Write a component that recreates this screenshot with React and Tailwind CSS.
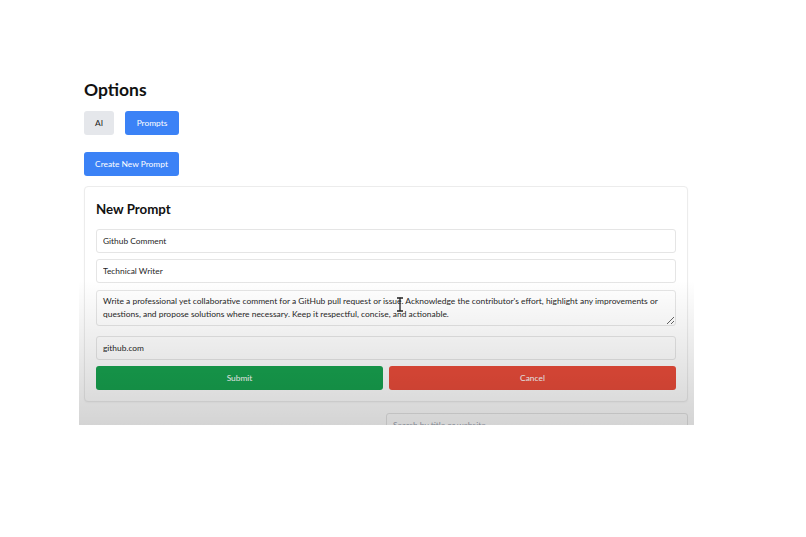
import { useState } from 'react';

const PROMPT_TEXT =
    "Write a professional yet collaborative comment for a GitHub pull request or issue. Acknowledge the contributor's effort, highlight any improvements or questions, and propose solutions where necessary. Keep it respectful, concise, and actionable.";

const App = () => {
    const [tab, setTab] = useState('prompts');
    const [title, setTitle] = useState('Github Comment');
    const [role, setRole] = useState('Technical Writer');
    const [prompt, setPrompt] = useState(PROMPT_TEXT);
    const [site, setSite] = useState('github.com');

    const inputClass =
        'h-[24px] w-full rounded-[3px] border border-[#e5e5e5] bg-white px-[6px] text-[8.4px] text-[#1f1f1f] outline-none';

    return (
        <div className="min-h-[537px] bg-white font-['Lato',sans-serif] text-[#111]">
            <div className="relative ml-[79px] h-[425px] w-[615px] overflow-hidden">
                <div className="pl-[5px] pr-[6px] pt-[79px]">
                    <h1 className="h-[22px] text-[17.5px] font-bold leading-[22px]">Options</h1>

                    {/* tabs */}
                    <div className="mt-[10px] flex gap-[11px]">
                        <button
                            onClick={() => setTab('ai')}
                            className={`h-[24px] w-[30px] rounded-[3px] text-[8.4px] ${tab === 'ai' ? 'bg-[#3b82f6] text-white' : 'bg-[#e5e7eb] text-[#222]'}`}
                        >
                            AI
                        </button>
                        <button
                            onClick={() => setTab('prompts')}
                            className={`h-[24px] w-[54px] rounded-[3px] text-[8.4px] ${tab === 'prompts' ? 'bg-[#3b82f6] text-white' : 'bg-[#e5e7eb] text-[#222]'}`}
                        >
                            Prompts
                        </button>
                    </div>

                    <button className="mt-[17px] h-[24px] w-[95px] rounded-[3px] bg-[#3b82f6] text-[8.4px] text-white">
                        Create New Prompt
                    </button>

                    {/* new prompt card */}
                    <div className="mt-[10px] rounded-[4px] border border-[#ececec] bg-white p-[11px] shadow-[0_1px_2px_rgba(0,0,0,0.04)]">
                        <h2 className="mb-[9px] h-[22px] text-[13.3px] font-bold leading-[22px]">New Prompt</h2>
                        <div className="flex flex-col gap-[6px]">
                            <input className={inputClass} value={title} onChange={e => setTitle(e.target.value)} />
                            <input className={inputClass} value={role} onChange={e => setRole(e.target.value)} />
                            <textarea
                                className="mb-[4px] mt-[1px] block h-[36px] w-full rounded-[3px] border border-[#e5e5e5] bg-white px-[6px] py-[4px] text-[8.45px] leading-[13px] text-[#1f1f1f] outline-none"
                                value={prompt}
                                onChange={e => setPrompt(e.target.value)}
                            />
                            <input className={inputClass} value={site} onChange={e => setSite(e.target.value)} />
                            <div className="flex gap-[6px]">
                                <button className="h-[24px] flex-1 rounded-[3px] bg-[#17a24f] text-[8.4px] text-white">Submit</button>
                                <button className="h-[24px] flex-1 rounded-[3px] bg-[#ea4c3a] text-[8.4px] text-white">Cancel</button>
                            </div>
                        </div>
                    </div>

                    <div className="mt-[11px] flex justify-end">
                        <input
                            className="h-[24px] w-[302px] rounded-[3px] border border-[#e5e5e5] bg-white px-[6px] text-[8.4px] outline-none placeholder:text-[#9ca3af]"
                            placeholder="Search by title or website"
                        />
                    </div>
                </div>

                {/* text cursor */}
                <svg className="pointer-events-none absolute left-[317px] top-[297px]" width="8" height="15" viewBox="0 0 8 15">
                    <path d="M1 1h2.5l.5.6.5-.6H7M4 1.6v11.8M1 14h2.5l.5-.6.5.6H7" fill="none" stroke="#222" strokeWidth="1.3" />
                </svg>

                {/* video fade */}
                <div className="pointer-events-none absolute inset-x-0 bottom-0 h-[145px] bg-linear-to-b from-transparent to-[rgba(0,0,0,0.17)]" />
            </div>
        </div>
    );
};

export default App;
